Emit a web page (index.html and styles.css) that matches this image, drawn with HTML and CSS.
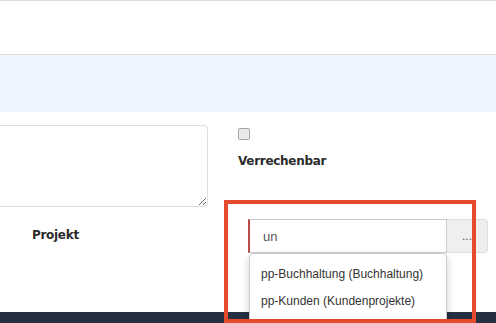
FILE: index.html
```html
<!DOCTYPE html>
<html lang="de">
<head>
  <meta charset="UTF-8" />
  <title>Projekt</title>
  <link rel="stylesheet" href="styles.css">
</head>
<body>

  <!-- Header -->
  <div class="topbar"></div>

  <!-- Info band -->
  <div class="infoband"></div>

  <!-- Form -->
  <div class="content">
    <div class="formgrid">
      <div class="cell">
        <textarea class="notes"></textarea>
      </div>
      <div class="cell checkcell">
        <input type="checkbox" class="check" />
        <label class="label">Verrechenbar</label>
      </div>

      <div class="cell labelcell">
        <label class="label">Projekt</label>
      </div>
      <div class="cell">
        <div class="inputgroup">
          <input class="searchinput" value="un" />
          <button class="morebtn">...</button>
          <ul class="dropdown">
            <li>pp-Buchhaltung (Buchhaltung)</li>
            <li>pp-Kunden (Kundenprojekte)</li>
          </ul>
        </div>
      </div>
    </div>

    <!-- Highlight marker -->
    <div class="marker"></div>
  </div>

  <div class="footer"></div>

</body>
</html>
```

FILE: styles.css
```css
* {
  margin: 0; padding: 0;
  box-sizing: border-box;
}
body {
  background-color: white;
  font-family: "DejaVu Sans", Verdana, sans-serif;
  color: #333;
  overflow: hidden;
}
.topbar {
  height: 55px;
  border-top: 1px solid #dcdcdc;
  border-bottom: 1px solid #dcdcdc;
}
.infoband {
  height: 57px;
  background-color: #eef5fe;
}
.content {
  position: relative;
  height: 200px;
  padding-top: 13px;
}
.formgrid {
  display: grid;
  grid-template-columns: 208px 1fr;
  column-gap: 30px;
  row-gap: 12px;
}
.notes {
  display: block;
  width: 220px;
  height: 82px;
  margin-left: -12px;
  border: 1px solid #ddd;
  border-radius: 4px;
  resize: both;
}
.checkcell {
  padding-top: 3px;
}
.check {
  appearance: none;
  display: block;
  width: 12px;
  height: 12px;
  border: 1px solid #a6a6a6;
  border-radius: 2px;
  background-color: #e9e9e9;
  margin-bottom: 14px;
}
.label {
  display: block;
  font-weight: bold;
  font-size: 12px;
  line-height: 14px;
  letter-spacing: -0.3px;
  color: #2b2b2b;
}
.labelcell {
  padding-left: 32px;
  padding-top: 9px;
}
.inputgroup {
  position: relative;
  display: flex;
  margin-left: 10px;
  width: 240px;
}
.searchinput {
  width: 199px;
  height: 34px;
  border: 1px solid #ccc;
  border-left: 2px solid #b94a48;
  padding-left: 13px;
  font-family: "Liberation Sans", Arial, sans-serif;
  font-size: 13px;
  color: #555;
  outline: none;
}
.morebtn {
  width: 41px;
  height: 34px;
  border: 1px solid #ddd;
  border-left: none;
  border-radius: 0 4px 4px 0;
  background-color: #efefef;
  font-family: "Liberation Sans", Arial, sans-serif;
  font-size: 12px;
  color: #555;
}
.dropdown {
  position: absolute;
  top: 34px;
  left: 1px;
  width: 198px;
  height: 80px;
  list-style: none;
  background-color: white;
  border: 1px solid #ccc;
  border-radius: 4px;
  box-shadow: 0 4px 10px rgba(0, 0, 0, 0.18);
  padding-top: 7px;
  z-index: 2;
}
.dropdown li {
  height: 27px;
  line-height: 27px;
  padding-left: 11px;
  font-family: "Liberation Sans", Arial, sans-serif;
  font-size: 12px;
  color: #333;
}
.marker {
  position: absolute;
  left: 224px;
  top: 88px;
  width: 252px;
  height: 123px;
  border: 4px solid #e64a2d;
  z-index: 3;
}
.footer {
  height: 20px;
  background-color: #243040;
}
```
